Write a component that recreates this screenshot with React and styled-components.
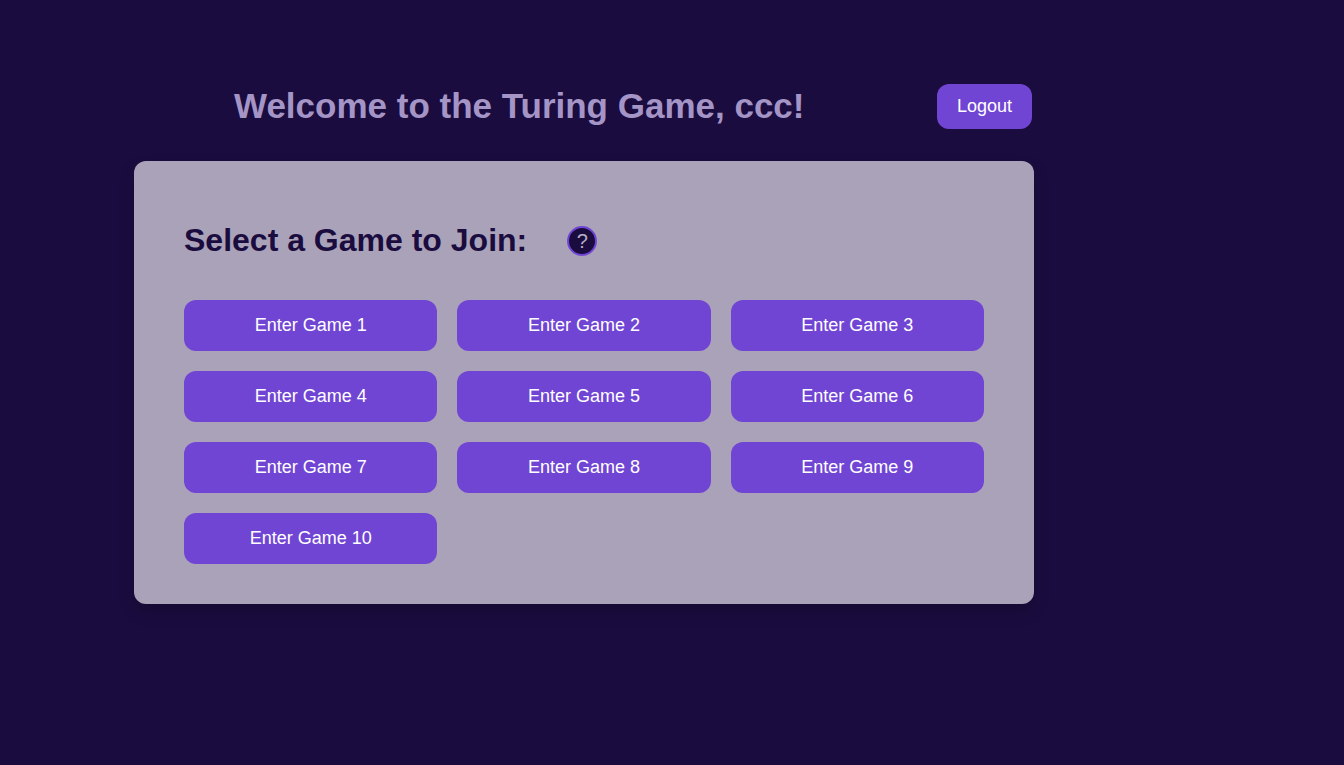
import React from "react";
import styled, { createGlobalStyle } from "styled-components";

const GlobalStyle = createGlobalStyle`
  * { box-sizing: border-box; }
  body {
    margin: 0;
    background: #1b0c3f;
    font-family: "Liberation Sans", Arial, sans-serif;
  }
`;

const Page = styled.div`
  max-width: 1100px;
  padding: 84px 66px 40px 134px;
`;

const Header = styled.header`
  display: flex;
  align-items: flex-start;
  justify-content: space-between;
  padding: 0 2px 0 100px;
  margin-bottom: 32px;
`;

const Title = styled.h1`
  margin: 0;
  color: #a495c6;
  font-size: 35px;
  line-height: 43px;
`;

const Button = styled.button`
  border: none;
  border-radius: 12px;
  background: #7145d4;
  color: #fff;
  font-family: inherit;
  font-size: 18px;
  line-height: 21px;
  padding: ${(p) => (p.$compact ? "12px 20px" : "15px 20px")};
  cursor: pointer;
`;

const Panel = styled.main`
  background: #aaa2b9;
  border-radius: 12px;
  padding: 58px 50px 40px;
  box-shadow: 0 8px 16px rgba(0, 0, 0, 0.2);
`;

const PanelHeader = styled.div`
  display: flex;
  align-items: center;
  gap: 40px;
  margin-bottom: 38px;
`;

const PanelTitle = styled.h2`
  margin: 0;
  color: #1b0c3f;
  font-size: 32px;
  line-height: 43px;
`;

const HelpButton = styled.button`
  width: 30px;
  height: 30px;
  padding: 0;
  border: 2px solid #7145d4;
  border-radius: 50%;
  background: #1b0c3f;
  color: #b8b0c6;
  font-family: inherit;
  font-size: 20px;
  line-height: 24px;
  cursor: pointer;
`;

const GameGrid = styled.div`
  display: grid;
  grid-template-columns: repeat(3, 1fr);
  gap: 20px;
`;

const games = Array.from({ length: 10 }, (_, i) => i + 1);

export default function App() {
  return (
    <>
      <GlobalStyle />
      <Page>
        <Header>
          <Title>Welcome to the Turing Game, ccc!</Title>
          <Button $compact type="button">Logout</Button>
        </Header>
        <Panel>
          <PanelHeader>
            <PanelTitle>Select a Game to Join:</PanelTitle>
            <HelpButton type="button" aria-label="Help">?</HelpButton>
          </PanelHeader>
          <GameGrid>
            {games.map((n) => (
              <Button key={n} type="button">{`Enter Game ${n}`}</Button>
            ))}
          </GameGrid>
        </Panel>
      </Page>
    </>
  );
}
